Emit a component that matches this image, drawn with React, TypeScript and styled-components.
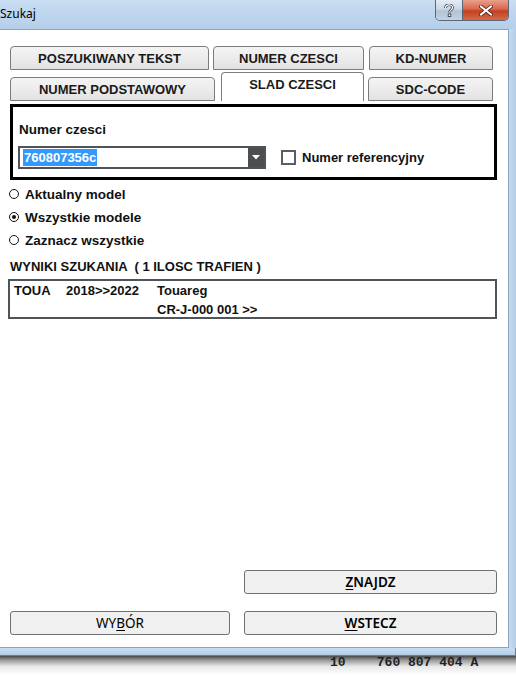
import React from "react";
import styled, { createGlobalStyle, css } from "styled-components";

const Global = createGlobalStyle`
  html, body { margin: 0; padding: 0; background: #ffffff; }
  body { width: 516px; height: 675px; overflow: hidden; }
`;

const Window = styled.div`
  width: 516px;
  height: 675px;
  display: flex;
  flex-direction: column;
  overflow: hidden;
  background: #ffffff;
  font-family: "Liberation Sans", Arial, sans-serif;
`;

const TitleBar = styled.div`
  height: 29px;
  flex: none;
  display: flex;
  align-items: flex-start;
  background: linear-gradient(180deg, #c9def2 0%, #bed6ee 45%, #b6cfe9 100%);
`;

const Title = styled.div`
  font-family: "Noto Sans", "Open Sans", sans-serif;
  font-size: 12px;
  color: #000;
  padding-top: 6px;
  line-height: 16px;
`;

const Caption = styled.div`
  margin-left: auto;
  margin-right: 7px;
  display: flex;
  height: 20px;
  border: 1px solid #5b6776;
  border-top: none;
  border-radius: 0 0 5px 5px;
  overflow: hidden;
`;

const CapBtn = styled.div<{ $close?: boolean }>`
  height: 20px;
  display: flex;
  align-items: center;
  justify-content: center;
  ${(p) =>
    p.$close
      ? css`
          width: 45px;
          background: linear-gradient(180deg, #e8a08e 0%, #d9674c 45%, #c4401f 55%, #d56a48 100%);
        `
      : css`
          width: 26px;
          border-right: 1px solid #5b6776;
          background: linear-gradient(180deg, #e4ecf5 0%, #cbd7e5 45%, #b3c3d6 55%, #c3d3e6 100%);
        `}
`;

const Middle = styled.div`
  flex: none;
  height: 619px;
  display: flex;
`;

const Client = styled.div`
  width: 509px;
  flex: none;
  background: #ffffff;
  border-top: 1px solid #8fa4bb;
  border-right: 1px solid #8fa4bb;
  border-bottom: 1px solid #8fa4bb;
  display: flex;
  flex-direction: column;
  box-sizing: border-box;
`;

const RightFrame = styled.div`
  flex: 1;
  background: linear-gradient(90deg, #c6dbf0, #b5cde7);
`;

const BottomFrame = styled.div`
  flex: none;
  height: 7px;
  background: linear-gradient(180deg, #c8ddf2, #b4cde8);
  border-bottom: 1px solid #6b7d92;
  border-right: 1px solid #6b7d92;
  width: 515px;
`;

const Backdrop = styled.div`
  flex: 1;
  background: linear-gradient(180deg, #4a4a4a 0%, #9a9a9a 22%, #e8e8e8 55%, #ffffff 100%);
  overflow: hidden;
`;

const BackdropText = styled.div`
  font-family: "Liberation Mono", monospace;
  font-size: 13px;
  font-weight: bold;
  color: #222;
  line-height: 14px;
  padding-left: 330px;
  white-space: pre;
`;

const TabRow = styled.div<{ $top: number; $h: number }>`
  display: flex;
  align-items: flex-end;
  padding-left: 10px;
  margin-top: ${(p) => p.$top}px;
  height: ${(p) => p.$h}px;
`;

const Tab = styled.div<{ $w: number; $gap: number; $active?: boolean }>`
  box-sizing: border-box;
  width: ${(p) => p.$w}px;
  margin-right: ${(p) => p.$gap}px;
  height: ${(p) => (p.$active ? 29 : 24)}px;
  border: 1px solid #7c7c7c;
  border-radius: 4px 4px 0 0;
  display: flex;
  align-items: center;
  justify-content: center;
  font-weight: bold;
  font-size: 13px;
  color: #1a1a1a;
  padding-top: ${(p) => (p.$active ? 0 : 1)}px;
  ${(p) =>
    p.$active
      ? css`
          background: #ffffff;
          border-bottom: none;
          padding-bottom: 6px;
        `
      : css`
          background: linear-gradient(180deg, #f4f4f4 0%, #ececec 50%, #e2e2e2 100%);
        `}
`;

const Panel = styled.div`
  margin: 3px 0 0 10px;
  width: 487px;
  height: 76px;
  box-sizing: border-box;
  border: 3px solid #000;
  padding: 15px 0 0 5px;
`;

const Label = styled.div`
  font-weight: bold;
  font-size: 13.5px;
  color: #111;
  line-height: 16px;
  margin-left: 1px;
`;

const FieldRow = styled.div`
  display: flex;
  align-items: center;
  margin-top: 8px;
`;

const Combo = styled.div`
  width: 248px;
  height: 23px;
  box-sizing: border-box;
  border: 2px solid #4e5458;
  display: flex;
  align-items: stretch;
`;

const ComboText = styled.div`
  flex: 1;
  display: flex;
  align-items: center;
  padding-left: 3px;
`;

const Selected = styled.span`
  background: #3399ff;
  color: #fff;
  font-weight: bold;
  font-size: 13px;
  line-height: 17px;
  padding: 0 1px;
`;

const Arrow = styled.div`
  width: 16px;
  background: #4b4f52;
  display: flex;
  align-items: center;
  justify-content: center;
`;

const Check = styled.div`
  width: 15px;
  height: 15px;
  box-sizing: border-box;
  border: 2px solid #5b5f63;
  margin-left: 15px;
  background: #fff;
`;

const CheckLabel = styled.div`
  font-weight: bold;
  font-size: 13px;
  color: #111;
  margin-left: 6px;
`;

const Radios = styled.div`
  margin: 6px 0 0 9px;
  display: flex;
  flex-direction: column;
  gap: 7px;
`;

const RadioRow = styled.div`
  display: flex;
  align-items: center;
  height: 16px;
  font-weight: bold;
  font-size: 13.5px;
  color: #111;
`;

const RadioDot = styled.div<{ $on?: boolean }>`
  width: 10px;
  height: 10px;
  box-sizing: border-box;
  border: 1.6px solid #111;
  border-radius: 50%;
  margin-right: 6px;
  display: flex;
  align-items: center;
  justify-content: center;
  &::after {
    content: "";
    display: ${(p) => (p.$on ? "block" : "none")};
    width: 4px;
    height: 4px;
    border-radius: 50%;
    background: #111;
  }
`;

const ResultsTitle = styled.div`
  margin: 11px 0 0 10px;
  font-weight: bold;
  font-size: 13px;
  color: #111;
  line-height: 16px;
  white-space: pre;
`;

const Results = styled.div`
  margin: 4px 0 0 8px;
  width: 489px;
  height: 40px;
  box-sizing: border-box;
  border: 2px solid #4e5458;
  padding: 0 0 0 4px;
`;

const ResRow = styled.div`
  display: grid;
  grid-template-columns: 52px 91px auto;
  font-weight: bold;
  font-size: 13px;
  color: #111;
  line-height: 19px;
`;

const Spacer = styled.div`
  flex: 1;
`;

const ButtonRow = styled.div<{ $bottom: number }>`
  display: flex;
  padding-left: 10px;
  gap: 14px;
  margin-bottom: ${(p) => p.$bottom}px;
`;

const Btn = styled.button<{ $w: number; $heavy?: boolean; $offset?: number }>`
  width: ${(p) => p.$w}px;
  height: 24px;
  margin-left: ${(p) => p.$offset ?? 0}px;
  box-sizing: border-box;
  border: 1px solid #707070;
  border-radius: 3px;
  background: #f0f0f0;
  font-family: "Noto Sans", "Open Sans", sans-serif;
  font-size: 13.5px;
  font-weight: ${(p) => (p.$heavy ? 600 : 400)};
  color: #000;
  padding: 0;
  display: flex;
  align-items: center;
  justify-content: center;
  u { text-decoration-thickness: 1px; text-underline-offset: 2px; }
`;

export default function App() {
  return (
    <>
      <Global />
      <Window>
        <TitleBar>
          <Title>Szukaj</Title>
          <Caption>
            <CapBtn>
              <svg width="10" height="13" viewBox="0 0 10 13">
                <path d="M1.5 4 C1.5 1.5 3 0.8 5 0.8 C7.2 0.8 8.5 2 8.5 3.8 C8.5 6 5.5 6.2 5.5 8.5" fill="none" stroke="#2a3440" strokeWidth="2.6" />
                <path d="M1.5 4 C1.5 1.5 3 0.8 5 0.8 C7.2 0.8 8.5 2 8.5 3.8 C8.5 6 5.5 6.2 5.5 8.5" fill="none" stroke="#ffffff" strokeWidth="1.2" />
                <rect x="4.2" y="10" width="2.6" height="2.6" fill="#fff" stroke="#2a3440" strokeWidth="0.8" />
              </svg>
            </CapBtn>
            <CapBtn $close>
              <svg width="14" height="11" viewBox="0 0 14 11">
                <path d="M2 1.5 L12 9.5 M12 1.5 L2 9.5" stroke="#5a2015" strokeWidth="3.6" strokeLinecap="square" />
                <path d="M2 1.5 L12 9.5 M12 1.5 L2 9.5" stroke="#ffffff" strokeWidth="2" strokeLinecap="square" />
              </svg>
            </CapBtn>
          </Caption>
        </TitleBar>
        <Middle>
          <Client>
            <TabRow $top={16} $h={24}>
              <Tab $w={199} $gap={4}>POSZUKIWANY TEKST</Tab>
              <Tab $w={151} $gap={5}>NUMER CZESCI</Tab>
              <Tab $w={124} $gap={0}>KD-NUMER</Tab>
            </TabRow>
            <TabRow $top={2} $h={29}>
              <Tab $w={205} $gap={6}>NUMER PODSTAWOWY</Tab>
              <Tab $w={143} $gap={4} $active>SLAD CZESCI</Tab>
              <Tab $w={125} $gap={0}>SDC-CODE</Tab>
            </TabRow>
            <Panel>
              <Label>Numer czesci</Label>
              <FieldRow>
                <Combo>
                  <ComboText>
                    <Selected>760807356c</Selected>
                  </ComboText>
                  <Arrow>
                    <svg width="8" height="5" viewBox="0 0 8 5">
                      <path d="M0 0 H8 L4 4.5 Z" fill="#ffffff" />
                    </svg>
                  </Arrow>
                </Combo>
                <Check />
                <CheckLabel>Numer referencyjny</CheckLabel>
              </FieldRow>
            </Panel>
            <Radios>
              <RadioRow>
                <RadioDot />
                Aktualny model
              </RadioRow>
              <RadioRow>
                <RadioDot $on />
                Wszystkie modele
              </RadioRow>
              <RadioRow>
                <RadioDot />
                Zaznacz wszystkie
              </RadioRow>
            </Radios>
            <ResultsTitle>WYNIKI SZUKANIA  ( 1 ILOSC TRAFIEN )</ResultsTitle>
            <Results>
              <ResRow>
                <span>TOUA</span>
                <span>2018&gt;&gt;2022</span>
                <span>Touareg</span>
              </ResRow>
              <ResRow>
                <span />
                <span />
                <span>CR-J-000 001 &gt;&gt;</span>
              </ResRow>
            </Results>
            <Spacer />
            <ButtonRow $bottom={17}>
              <Btn $w={253} $heavy $offset={234}>
                <u>Z</u>NAJDZ
              </Btn>
            </ButtonRow>
            <ButtonRow $bottom={12}>
              <Btn $w={220}>
                WY<u>B</u>ÓR
              </Btn>
              <Btn $w={253} $heavy>
                <u>W</u>STECZ
              </Btn>
            </ButtonRow>
          </Client>
          <RightFrame />
        </Middle>
        <BottomFrame />
        <Backdrop>
          <BackdropText>{"10    760 807 404 A"}</BackdropText>
        </Backdrop>
      </Window>
    </>
  );
}
